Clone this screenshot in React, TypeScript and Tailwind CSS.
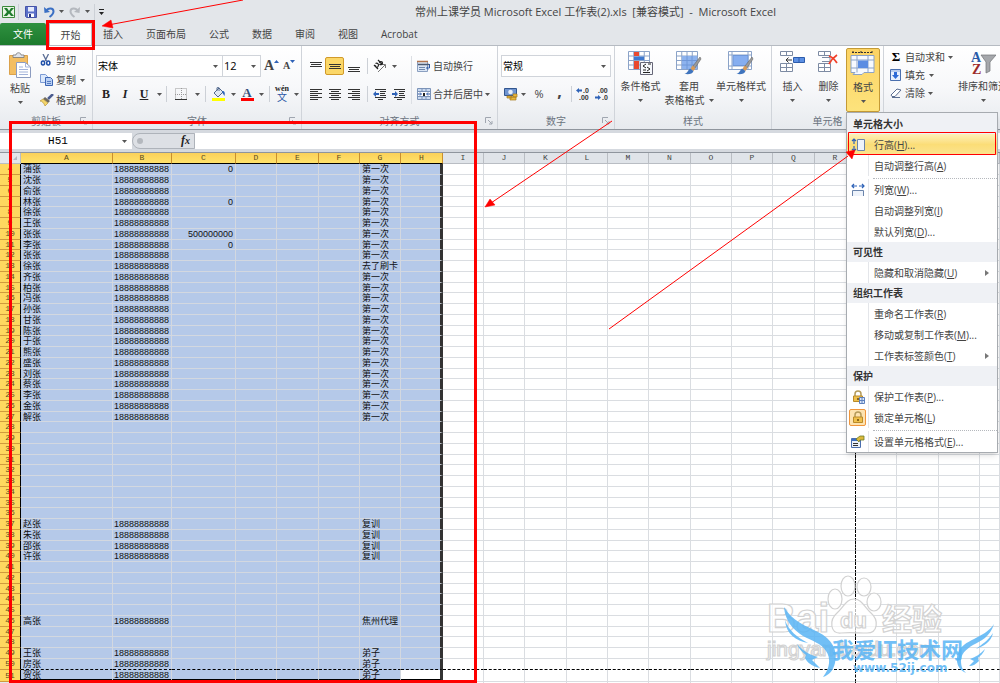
import React from 'react';
import clsx from 'clsx';

interface IconProps {
  className?: string;
}

interface RowData {
  name: string;
  amount?: string;
  note: string;
}

interface MenuEntry {
  type: 'header' | 'item' | 'separator';
  label?: string;
  hotkey?: string;
  suffix?: string;
  icon?: React.ReactNode;
  submenu?: boolean;
  active?: boolean;
  checked?: boolean;
}

const PHONE = '18888888888';

const ROWS: Record<number, RowData> = {
  4: { name: '蒲张', amount: '0', note: '第一次' },
  5: { name: '沈张', note: '第一次' },
  6: { name: '俞张', note: '第一次' },
  7: { name: '林张', amount: '0', note: '第一次' },
  8: { name: '徐张', note: '第一次' },
  9: { name: '王张', note: '第一次' },
  10: { name: '张张', amount: '500000000', note: '第一次' },
  11: { name: '李张', amount: '0', note: '第一次' },
  12: { name: '张张', note: '第一次' },
  13: { name: '徐张', note: '去了刷卡' },
  14: { name: '齐张', note: '第一次' },
  15: { name: '柏张', note: '第一次' },
  16: { name: '冯张', note: '第一次' },
  17: { name: '孙张', note: '第一次' },
  18: { name: '甘张', note: '第一次' },
  19: { name: '陈张', note: '第一次' },
  20: { name: '于张', note: '第一次' },
  21: { name: '熊张', note: '第一次' },
  22: { name: '盛张', note: '第一次' },
  23: { name: '刘张', note: '第一次' },
  24: { name: '蔡张', note: '第一次' },
  25: { name: '李张', note: '第一次' },
  26: { name: '金张', note: '第一次' },
  27: { name: '解张', note: '第一次' },
  37: { name: '赵张', note: '复训' },
  38: { name: '朱张', note: '复训' },
  39: { name: '邵张', note: '复训' },
  40: { name: '许张', note: '复训' },
  46: { name: '高张', note: '焦州代理' },
  49: { name: '王张', note: '弟子' },
  50: { name: '房张', note: '弟子' },
  51: { name: '贺张', note: '弟子' },
};

const COLUMNS = [
  { id: 'A', width: 'w-[92px]' },
  { id: 'B', width: 'w-[59px]' },
  { id: 'C', width: 'w-[64px]' },
  { id: 'D', width: 'w-[41px]' },
  { id: 'E', width: 'w-[42px]' },
  { id: 'F', width: 'w-[41px]' },
  { id: 'G', width: 'w-[41px]' },
  { id: 'H', width: 'w-[42px]' },
  { id: 'I', width: 'w-[41px]' },
  { id: 'J', width: 'w-[41px]' },
  { id: 'K', width: 'w-[42px]' },
  { id: 'L', width: 'w-[41px]' },
  { id: 'M', width: 'w-[41px]' },
  { id: 'N', width: 'w-[42px]' },
  { id: 'O', width: 'w-[41px]' },
  { id: 'P', width: 'w-[41px]' },
  { id: 'Q', width: 'w-[42px]' },
  { id: 'R', width: 'w-[41px]' },
  { id: 'S', width: 'w-[41px]' },
  { id: 'T', width: 'w-[42px]' },
  { id: 'U', width: 'w-[41px]' },
  { id: 'V', width: '' },
];

const SELECTED = 'ABCDEFGH';
const TABS = ['插入', '页面布局', '公式', '数据', '审阅', '视图', 'Acrobat'];

/* ---------- icons ---------- */

const Caret: React.FC<IconProps> = ({ className }) => (
  <svg className={clsx('h-[3px] w-[5px] shrink-0', className)} viewBox="0 0 5 3">
    <path d="M0 0h5L2.5 3z" fill="#555" />
  </svg>
);

const ExcelIcon = () => (
  <svg className="h-4 w-[13px]" viewBox="0 0 13 16">
    <path d="M.5 2.5h12v11H.5z" fill="#e8f4e4" stroke="#3b8a3b" />
    <path d="M2 4h3l2 3 2-3h3L8.500 8l3.500 4h-3L7 9.500 5 12H1.500L5 8z" fill="#1e7b2c" />
  </svg>
);

const SaveIcon = () => (
  <svg className="h-3 w-3" viewBox="0 0 12 12">
    <path d="M.5.5h11v11h-10l-1-1z" fill="#5a6fc8" stroke="#4553a8" />
    <path d="M3 1h6v4.500H3z" fill="#e4eafc" />
    <path d="M3 7.500h6V11H3z" fill="#fff" />
    <path d="M4 8h2v3H4z" fill="#26337e" />
  </svg>
);

const UndoIcon: React.FC<IconProps> = ({ className }) => (
  <svg className={clsx('h-3 w-[11px]', className)} viewBox="0 0 11 12">
    <path d="M2 5C4 1.500 9.500 1.500 9.500 5.500 9.500 8 7.500 9.500 5.500 11" fill="none" stroke="currentColor" strokeWidth="2" />
    <path d="M0 1l.5 6L6 6z" fill="currentColor" />
  </svg>
);

const PasteIcon = () => (
  <svg className="h-[26px] w-6" viewBox="0 0 24 26">
    <path d="M1.500 3.500h18v19h-18z" fill="#f3be62" stroke="#dba24c" />
    <path d="M5 5.500V3h3c0-3 5-3 5 0h3v2.500z" fill="#dfe3ea" stroke="#777" strokeWidth=".8" />
    <path d="M8.500 10.500h9l5 4.500v10.500h-14z" fill="#fff" stroke="#8c9cc0" />
    <path d="M17.500 10.500V15h5M11 17.500h9M11 20h9M11 22.500h9M11 15h4" fill="none" stroke="#a3b4da" />
  </svg>
);

const CutIcon = () => (
  <svg className="h-3 w-3" viewBox="0 0 12 12">
    <path d="M3 0l3.500 7M8.500 0L5 7" stroke="#5c6f96" strokeWidth="1.300" />
    <ellipse cx="3" cy="9" rx="1.600" ry="2" fill="none" stroke="#1f4fa8" strokeWidth="1.500" />
    <ellipse cx="8.300" cy="9" rx="1.600" ry="2" fill="none" stroke="#1f4fa8" strokeWidth="1.500" />
  </svg>
);

const CopyIcon = () => (
  <svg className="h-3 w-[13px]" viewBox="0 0 13 12">
    <path d="M.5.5h5l2 2v6h-7z" fill="#dbe8fb" stroke="#7b9ad4" />
    <path d="M5.500 3.500h5l2 2v6h-7z" fill="#b9d0f4" stroke="#3d66b4" />
    <path d="M7 7.500h4M7 9.500h4" stroke="#3d66b4" strokeWidth=".8" />
  </svg>
);

const BrushIcon = () => (
  <svg className="h-3 w-[14px]" viewBox="0 0 14 12">
    <path d="M13 0L8 5" stroke="#4b5c8f" strokeWidth="2.500" />
    <path d="M5 3l5 4-2 2-5-4z" fill="#6f6a60" />
    <path d="M3 5l5 4-3 3C4 9 2 7 0 7z" fill="#f4d66a" stroke="#b8943a" strokeWidth=".7" />
  </svg>
);

const BordersIcon = () => (
  <svg className="h-3 w-3" viewBox="0 0 12 12">
    <path d="M.5.5h11v11H.5zM6.500 0v12M0 6.500h12" fill="none" stroke="#999" strokeDasharray="1 1" />
    <path d="M0 11.500h12" stroke="#333" />
  </svg>
);

const BucketIcon = () => (
  <svg className="h-[14px] w-[14px]" viewBox="0 0 14 14">
    <path d="M7 1L2 6l4 4 5-5zM5 4V1c0-1 2-1 2 0v3" fill="#dfe7f2" stroke="#52688c" />
    <path d="M10 4c3 0 3 2 2.500 5L10.500 6z" fill="#2c63b8" />
    <path d="M0 11h13v3H0z" fill="#ff0" />
  </svg>
);

const MergeIcon = () => (
  <svg className="h-3 w-[14px]" viewBox="0 0 14 12">
    <path d="M.5.5h13v11H.5zM.5 3.500h13M.5 8.500h13M5 .5v3M9 .5v3M5 8.500v3M9 8.500v3" fill="#c9d9f0" stroke="#7b93b8" />
    <path d="M1 4h12v4H1z" fill="#fff" />
    <path d="M1 6h3M13 6h-3M3 4.500L4.500 6 3 7.500M11 4.500L9.500 6 11 7.500" fill="none" stroke="#2b57a5" />
    <path d="M6 5h2v3H6z" fill="#222" />
  </svg>
);

const WrapIcon = () => (
  <svg className="h-3 w-[14px]" viewBox="0 0 14 12">
    <path d="M.5 1.500h10v10H.5z" fill="#dbe6f5" stroke="#8a9fc0" />
    <path d="M0 1.500h11" stroke="#b3744d" strokeWidth="1.500" />
    <path d="M1 4.500h11" stroke="#4d5a70" strokeWidth="1.500" />
    <path d="M2 7.500h6M2 9.500h6" stroke="#7088ad" />
    <path d="M12.500 4v4H10M11 6.500L9.500 8 11 9.500" fill="none" stroke="#2b57a5" />
  </svg>
);

const OrientationIcon = () => (
  <svg className="h-[14px] w-[14px]" viewBox="0 0 14 14">
    <path d="M5 13l7-7M12.500 9V5.500H9" fill="none" stroke="#777" />
    <path d="M1 6l4 4M2.500 4.500c2-1 4 1 2.500 3s-3 0-2-1M5 1l4.500 4.500M6.500 4c0-2 3-2 3 0S7.500 6 6.500 5" fill="none" stroke="#222" strokeWidth="1.200" />
  </svg>
);

const LINES = {
  top: 'M0 2.500h12M1 4.500h10M0 6.500h12',
  middle: 'M0 4.500h12M1 6.500h10M0 8.500h12',
  bottom: 'M0 7.500h12M1 9.500h10M0 11.500h12',
  left: 'M0 1.500h12M0 3.500h8M0 5.500h12M0 7.500h8M0 9.500h12M0 11.500h8',
  center: 'M0 1.500h12M2 3.500h8M0 5.500h12M2 7.500h8M0 9.500h12M2 11.500h8',
  right: 'M0 1.500h12M4 3.500h8M0 5.500h12M4 7.500h8M0 9.500h12M4 11.500h8',
};

const LinesIcon: React.FC<{ kind: keyof typeof LINES }> = ({ kind }) => (
  <svg className="h-3 w-3" viewBox="0 0 12 12">
    <path d={LINES[kind]} stroke="#333" strokeWidth="1.200" />
  </svg>
);

const IndentIcon: React.FC<{ reverse?: boolean }> = ({ reverse }) => (
  <svg className="h-3 w-[14px]" viewBox="0 0 14 12">
    <path d="M2 1.500h11M7 3.500h6M7 5.500h5M7 7.500h6M2 9.500h11M5 11.500h5" stroke="#333" strokeWidth="1.200" />
    <path d={reverse ? 'M0 5h3V3l3 3-3 3V7H0z' : 'M6 5H3V3L0 6l3 3V7h3z'} fill="#2e62b7" />
  </svg>
);

const CurrencyIcon = () => (
  <svg className="h-[14px] w-[14px]" viewBox="0 0 14 14">
    <path d="M.5 1.500h12v7H.5z" fill="#6f94d0" stroke="#32568f" />
    <circle cx="6.500" cy="5" r="2.300" fill="#e7effa" />
    <path d="M6 10h6v3H6zM3 9h5v2H3zM9 7h4v3H9z" fill="#e9b93f" stroke="#a67a1a" strokeWidth=".7" />
  </svg>
);

const DecimalIcon: React.FC<{ reverse?: boolean }> = ({ reverse }) => (
  <svg className="h-[14px] w-[14px] font-['Liberation_Sans'] text-[7px] font-bold" viewBox="0 0 14 14">
    <text x={reverse ? 3 : 7} y="6" fill="#333">{reverse ? '.00' : '.0'}</text>
    <text x={reverse ? 7 : 3} y="13" fill="#333">{reverse ? '.0' : '.00'}</text>
    <path d={reverse ? 'M0 9.500h3V8l3 2.500L3 13v-1.500H0z' : 'M6 2.500H3V1L0 3.500 3 6V4.500h3z'} fill="#2e62b7" />
  </svg>
);

const GRID_LINES = 'M.5 1.500h21v18H.5zM.5 6h21M.5 10.500h21M.5 15h21M5.750 1.500v18M11 1.500v18M16.250 1.500v18';

const ConditionalIcon = () => (
  <svg className="h-[26px] w-[26px]" viewBox="0 0 26 26">
    <path d={GRID_LINES} fill="#fff" stroke="#8ba3c8" />
    <path d="M6 2h5v4H6zM6 11h5v8H6z" fill="#e9492f" />
    <path d="M6 6.500h10V10H6z" fill="#3e78cf" />
    <path d="M12.500 12.500h12v12h-12z" fill="#f6f8fc" stroke="#667" />
    <path d="M18 14l-3 2 3 2M15 20h3M19 17l3 2-3 2M15 22.500h7M20 14h3" fill="none" stroke="#222" />
  </svg>
);

const PaintBrush = () => (
  <g>
    <path d="M24 7l-7 9 2 2 6-9z" fill="#9a9a9a" stroke="#666" strokeWidth=".6" />
    <path d="M16.500 15.500l3 2.500-2 3-3-2z" fill="#d99b57" />
    <path d="M14 18.500l3.500 2.500c-1 3-4 3.500-9 3 3-1 3.500-4 5.500-5.500z" fill="#3f74bd" />
  </g>
);

const TableStyleIcon = () => (
  <svg className="h-[26px] w-[26px]" viewBox="0 0 26 26">
    <path d={GRID_LINES} fill="#fff" stroke="#8ba3c8" />
    <path d="M6 6h15v13H6z" fill="#8db3ee" />
    <path d="M6 10.500h15M6 15h15M11 6v13M16 6v13" stroke="#6f97d8" />
    <PaintBrush />
  </svg>
);

const CellStyleIcon = () => (
  <svg className="h-[26px] w-[26px]" viewBox="0 0 26 26">
    <path d="M.5 1.500h23v18H.5zM.5 5h23M.5 16h23M4 1.500v18M20 1.500v18" fill="#fff" stroke="#8ba3c8" />
    <path d="M5 5.500h15v10H5z" fill="#86aef0" stroke="#6f97d8" />
    <PaintBrush />
  </svg>
);

const InsertIcon = () => (
  <svg className="h-[26px] w-[26px]" viewBox="0 0 26 26">
    <path d="M.5 1.500h12v4H.5zM6.500 1.500v4M.5 13.500h12v8H.5zM6.500 13.500v8M.5 17.500h12" fill="#fff" stroke="#7d8ba3" />
    <path d="M13.500 7.500h11v5h-11zM19 7.500v5" fill="#5c90e4" stroke="#2d5cab" />
    <path d="M12 10H6M8.500 7.500L6 10l2.500 2.500" fill="none" stroke="#333" />
  </svg>
);

const DeleteIcon = () => (
  <svg className="h-[26px] w-[26px]" viewBox="0 0 26 26">
    <path d="M2.500 1.500h12v4h-12zM8.500 1.500v4M2.500 13.500h12v8h-12zM8.500 13.500v8M2.500 17.500h12M6 7.500h8v4H6" fill="#fff" stroke="#7d8ba3" />
    <path d="M13 6c3 1 6 4 8 7M21 5c-3 2-6 5-8 9" fill="none" stroke="#f0402a" strokeWidth="1.800" />
  </svg>
);

const FormatIcon = () => (
  <svg className="h-[26px] w-[26px]" viewBox="0 0 26 26">
    <path d="M2 1.500h20M3 0v3M11 0v3M22 0v3" stroke="#333" strokeDasharray="2 1" />
    <path d="M1 4.500h23v17H14l-2 2H3l2-2H1zM1 9h23M1 17h23M7 4.500v17M18 4.500v17" fill="#f7faff" stroke="#8ba3c8" />
    <path d="M8 9.500h10V17H8z" fill="#5b8de2" />
  </svg>
);

const FillIcon = () => (
  <svg className="h-3 w-[11px]" viewBox="0 0 11 12">
    <path d="M.5.5h10v11H.5z" fill="#e9f1fd" stroke="#4a6fae" />
    <path d="M1 1h9v2H1z" fill="#b9cdee" />
    <path d="M4 3h3v3h2L5.500 10 2 6h2z" fill="#2e6bd6" />
  </svg>
);

const EraserIcon = () => (
  <svg className="h-3 w-3" viewBox="0 0 12 12">
    <path d="M1 8l6-6 4 1-6 6.500H2z" fill="#fff" stroke="#5a6d90" />
    <path d="M2 10.500h8" stroke="#5a6d90" />
  </svg>
);

const SortIcon = () => (
  <svg className="h-[26px] w-[26px] font-['Liberation_Serif'] text-[14px] font-bold" viewBox="0 0 26 26">
    <path d="M11 5h15l-6 7v9l-4 2V12z" fill="#a5a7ab" stroke="#707276" strokeWidth=".7" />
    <text x="1" y="12" fill="#2a5caa">A</text>
    <text x="2" y="24" fill="#9c2b2b">Z</text>
  </svg>
);

const RowHeightIcon = () => (
  <svg className="h-[14px] w-[14px]" viewBox="0 0 14 14">
    <path d="M3 1v5M3 8v5M1 3l2-2 2 2M1 11l2 2 2-2" fill="none" stroke="#2e62b7" strokeWidth="1.200" />
    <path d="M6.500 1.500h7v11h-7z" fill="#eef3fb" stroke="#6a84ab" />
  </svg>
);

const ColWidthIcon = () => (
  <svg className="h-[14px] w-[14px]" viewBox="0 0 14 14">
    <path d="M1 3h5M8 3h5M3 1L1 3l2 2M11 1l2 2-2 2" fill="none" stroke="#2e62b7" strokeWidth="1.200" />
    <path d="M1.500 13V7.500h11V13" fill="#eef3fb" stroke="#6a84ab" />
  </svg>
);

const LockIcon: React.FC<{ sheet?: boolean }> = ({ sheet }) => (
  <svg className="h-[14px] w-[14px]" viewBox="0 0 14 14">
    <path d="M4 6V4c0-4 6-4 6 0v2" fill="none" stroke="#b39a5a" strokeWidth="1.500" />
    <path d="M2.500 6h9v5.500h-9z" fill="#efc04c" stroke="#b98a2a" />
    <path d="M7 8v2" stroke="#6b4b0b" strokeWidth="1.500" />
    {sheet && <path d="M8.500 7.500h5v6h-5zM8.500 10.500h5M11 7.500v6" fill="#dce8fa" stroke="#5d80bd" />}
  </svg>
);

const FormatCellsIcon = () => (
  <svg className="h-[14px] w-[14px]" viewBox="0 0 14 14">
    <path d="M.5 3.500h9v9h-9z" fill="#eaf1fb" stroke="#4a6fae" />
    <path d="M1 4h8v2H1z" fill="#3e6fc0" />
    <path d="M2 8.500h5M2 10.500h5" stroke="#333" />
    <path d="M5 4l4-3h4v4H9L8 7z" fill="#dcb83a" stroke="#6d7c2a" strokeWidth=".8" />
  </svg>
);

const MENU: MenuEntry[] = [
  { type: 'header', label: '单元格大小' },
  { type: 'item', label: '行高', hotkey: 'H', suffix: '...', icon: <RowHeightIcon />, active: true },
  { type: 'item', label: '自动调整行高', hotkey: 'A' },
  { type: 'separator' },
  { type: 'item', label: '列宽', hotkey: 'W', suffix: '...', icon: <ColWidthIcon /> },
  { type: 'item', label: '自动调整列宽', hotkey: 'I' },
  { type: 'item', label: '默认列宽', hotkey: 'D', suffix: '...' },
  { type: 'header', label: '可见性' },
  { type: 'item', label: '隐藏和取消隐藏', hotkey: 'U', submenu: true },
  { type: 'header', label: '组织工作表' },
  { type: 'item', label: '重命名工作表', hotkey: 'R' },
  { type: 'item', label: '移动或复制工作表', hotkey: 'M', suffix: '...' },
  { type: 'item', label: '工作表标签颜色', hotkey: 'T', submenu: true },
  { type: 'header', label: '保护' },
  { type: 'item', label: '保护工作表', hotkey: 'P', suffix: '...', icon: <LockIcon sheet /> },
  { type: 'item', label: '锁定单元格', hotkey: 'L', icon: <LockIcon />, checked: true },
  { type: 'separator' },
  { type: 'item', label: '设置单元格格式', hotkey: 'E', suffix: '...', icon: <FormatCellsIcon /> },
];

/* ---------- ribbon ---------- */

interface GroupProps {
  label: string;
  className: string;
  launcher?: boolean;
  children: React.ReactNode;
}

const Group: React.FC<GroupProps> = ({ label, className, launcher, children }) => (
  <section className={clsx('flex shrink-0 flex-col whitespace-nowrap border-r border-[#d0d4da]', className)}>
    <div className="h-[67px]">{children}</div>
    <div className="relative flex h-4 items-center justify-center text-[#6b7480]">
      {label}
      {launcher && (
        <svg className="absolute right-1 top-1 h-2 w-2" viewBox="0 0 8 8">
          <path d="M.5 6V.5H6M3 3l4 4M7 4v3H4" fill="none" stroke="#a0a6b0" />
        </svg>
      )}
    </div>
  </section>
);

const Sep = () => <span className="h-4 w-px shrink-0 bg-[#ccd0d6]" />;

interface ToolProps {
  label: string;
  className?: string;
  children: React.ReactNode;
}

const Tool: React.FC<ToolProps> = ({ label, className, children }) => (
  <button aria-label={label} className={clsx('flex h-[18px] shrink-0 items-center justify-center [&>svg]:shrink-0', className)}>
    {children}
  </button>
);

interface BigButtonProps {
  lines: string[];
  className: string;
  children: React.ReactNode;
}

const BigButton: React.FC<BigButtonProps> = ({ lines, className, children }) => (
  <button className={clsx('flex h-16 shrink-0 flex-col items-center pt-[2px]', className)}>
    {children}
    <span className="mt-[3px] h-[14px] leading-[14px]">{lines[0]}</span>
    <span className="flex h-[14px] items-center gap-1 leading-[14px]">
      {lines[1]}
      <Caret />
    </span>
  </button>
);

interface PickerProps {
  label: string;
  value: string;
  className: string;
}

const Picker: React.FC<PickerProps> = ({ label, value, className }) => (
  <div className={clsx('relative h-[22px] border border-[#d0d4da] bg-white', className)}>
    <select aria-label={label} defaultValue={value} className="h-full w-full appearance-none pl-px text-black outline-none">
      <option>{value}</option>
    </select>
    <Caret className="pointer-events-none absolute right-1 top-[9px]" />
  </div>
);

const FormatMenu = () => (
  <div className="absolute left-0 top-16 z-20 w-[152px] border border-[#a7abb0] bg-white shadow-md" role="menu">
    {MENU.map((entry, i) => {
      if (entry.type === 'header') {
        return (
          <div key={i} className={clsx('flex items-center bg-[#eff1f5] pl-[6px] font-bold text-[#333]', i === 0 ? 'h-[21px]' : 'h-5')}>
            {entry.label}
          </div>
        );
      }
      if (entry.type === 'separator') {
        return <div key={i} className="ml-[26px] h-[3px] border-b border-dotted border-[#b5b8bd]" />;
      }
      return (
        <button
          key={i}
          role="menuitem"
          className={clsx(
            'flex h-[21px] w-full items-center text-left text-[#444]',
            entry.active && 'bg-linear-to-b from-[#fdf0b8] via-[#fbdd77] to-[#fbe48f]'
          )}
        >
          <span className={clsx('flex h-[21px] w-[22px] shrink-0 items-center justify-center', !entry.active && 'border-r border-[#e4e6ea]')}>
            <span className={clsx('flex size-[17px] items-center justify-center', entry.checked && 'rounded-xs border border-[#f0953b] bg-[#fde3b0]')}>
              {entry.icon}
            </span>
          </span>
          <span className="ml-[5px] flex-1">
            {entry.label}(<u>{entry.hotkey}</u>){entry.suffix}
          </span>
          {entry.submenu && (
            <svg className="mr-2 h-[6px] w-1" viewBox="0 0 4 6">
              <path d="M0 0l4 3-4 3z" fill="#777" />
            </svg>
          )}
        </button>
      );
    })}
  </div>
);

const Ribbon = () => (
  <div className="flex h-[85px] border-y border-t-[#b6bbc2] border-b-[#8f959d] bg-linear-to-b from-white via-[#f7f8fa] to-[#e7eaee]">
    <Group label="剪贴板" launcher className="w-[93px]">
      <div className="flex pt-1">
        <BigButton lines={['粘贴']} className="w-10">
          <PasteIcon />
        </BigButton>
        <div className="flex flex-col">
          <button className="flex h-5 items-center gap-1"><CutIcon />剪切</button>
          <button className="flex h-5 items-center gap-[3px]"><CopyIcon />复制<Caret className="ml-px" /></button>
          <button className="flex h-5 items-center gap-[2px]"><BrushIcon />格式刷</button>
        </div>
      </div>
    </Group>

    <Group label="字体" launcher className="w-[209px]">
      <div className="flex items-center pl-[3px] pt-[9px]">
        <Picker label="字体" value="宋体" className="w-[127px] text-[10px]" />
        <Picker label="字号" value="12" className="-ml-px w-[39px] text-[11px]" />
        <Tool label="增大字号" className="w-5 pl-px font-['Liberation_Serif'] text-[14px] font-bold">
          A<svg className="mb-[10px] h-[3px] w-[5px]" viewBox="0 0 5 3"><path d="M0 3l2.500-3L5 3z" fill="#2e62b7" /></svg>
        </Tool>
        <Tool label="减小字号" className="w-4 font-['Liberation_Serif'] text-[10px] font-bold">
          A<svg className="mb-[10px] h-[3px] w-[5px]" viewBox="0 0 5 3"><path d="M0 0l2.500 3L5 0z" fill="#2e62b7" /></svg>
        </Tool>
      </div>
      <div className="flex items-center pl-1 pt-2 font-['Liberation_Serif'] text-[12px] text-[#222]">
        <Tool label="加粗" className="w-[18px] font-bold">B</Tool>
        <Tool label="倾斜" className="w-5 font-bold italic">I</Tool>
        <Tool label="下划线" className="w-[18px] font-bold underline">U</Tool>
        <Tool label="下划线选项" className="w-[13px]"><Caret /></Tool>
        <Sep />
        <Tool label="边框" className="w-7"><BordersIcon /></Tool>
        <Tool label="边框选项" className="w-1"><Caret /></Tool>
        <span className="w-[6px]" />
        <Sep />
        <Tool label="填充颜色" className="w-[25px]"><BucketIcon /></Tool>
        <Tool label="填充颜色选项" className="w-1"><Caret /></Tool>
        <Tool label="字体颜色" className="w-6">
          <span className="flex h-[14px] w-[13px] items-center justify-center border-b-[3px] border-[#f00] text-[13px] font-bold leading-[12px] text-[#35507c]">A</span>
        </Tool>
        <Tool label="字体颜色选项" className="w-1"><Caret /></Tool>
        <span className="w-[6px]" />
        <Sep />
        <Tool label="拼音" className="w-6 flex-col">
          <span className="text-[8px] font-bold leading-[6px]">wén</span>
          <span className="font-['Noto_Sans_CJK_SC'] text-[10px] leading-[10px] text-[#2b57a5]">文</span>
        </Tool>
        <Caret />
      </div>
    </Group>

    <Group label="对齐方式" launcher className="w-[196px]">
      <div className="flex pl-1 pt-[10px]">
        <div className="w-[105px]">
          <div className="flex h-5 items-center">
            <Tool label="顶端对齐" className="w-[19px]"><LinesIcon kind="top" /></Tool>
            <Tool label="垂直居中" className="w-[19px] rounded-xs border border-[#d19a2a] bg-[#fbd768]"><LinesIcon kind="middle" /></Tool>
            <Tool label="底端对齐" className="w-[19px]"><LinesIcon kind="bottom" /></Tool>
            <span className="w-1" />
            <Sep />
            <Tool label="方向" className="w-6"><OrientationIcon /></Tool>
            <Caret />
          </div>
          <div className="mt-2 flex h-5 items-center">
            <Tool label="左对齐" className="w-[19px]"><LinesIcon kind="left" /></Tool>
            <Tool label="居中" className="w-[19px]"><LinesIcon kind="center" /></Tool>
            <Tool label="右对齐" className="w-[19px]"><LinesIcon kind="right" /></Tool>
            <span className="w-1" />
            <Sep />
            <Tool label="减少缩进" className="w-6"><IndentIcon /></Tool>
            <Tool label="增加缩进" className="w-[14px]"><IndentIcon reverse /></Tool>
          </div>
        </div>
        <div className="border-l border-[#dcdfe4] pl-[5px]">
          <button className="flex h-5 items-center gap-[2px]"><WrapIcon />自动换行</button>
          <button className="mt-2 flex h-5 items-center gap-[2px]">
            <MergeIcon />合并后居中<Caret />
          </button>
        </div>
      </div>
    </Group>

    <Group label="数字" launcher className="w-[117px]">
      <div className="px-[3px] pt-[9px]">
        <Picker label="数字格式" value="常规" className="w-full text-[10px]" />
        <div className="flex items-center pt-2">
          <Tool label="会计数字格式" className="w-5"><CurrencyIcon /></Tool>
          <Caret />
          <Tool label="百分比样式" className="w-[26px] text-[11px]">%</Tool>
          <Tool label="千位分隔样式" className="w-[15px] pb-[6px] text-[16px] font-bold">,</Tool>
          <span className="w-1" />
          <Sep />
          <Tool label="增加小数位数" className="w-[22px]"><DecimalIcon /></Tool>
          <Tool label="减少小数位数" className="w-4"><DecimalIcon reverse /></Tool>
        </div>
      </div>
    </Group>

    <Group label="样式" className="w-[157px]">
      <div className="flex pt-[2px]">
        <BigButton lines={['条件格式']} className="w-[51px]"><ConditionalIcon /></BigButton>
        <BigButton lines={['套用', '表格格式']} className="w-[46px]"><TableStyleIcon /></BigButton>
        <BigButton lines={['单元格样式']} className="w-[58px]"><CellStyleIcon /></BigButton>
      </div>
    </Group>

    <Group label="单元格" className="w-[112px]">
      <div className="flex pl-[2px] pt-[2px]">
        <BigButton lines={['插入']} className="w-[37px]"><InsertIcon /></BigButton>
        <BigButton lines={['删除']} className="w-[35px]"><DeleteIcon /></BigButton>
        <div className="relative">
          <BigButton lines={['格式']} className="w-[34px] rounded-xs border border-[#c49a35] bg-linear-to-b from-[#fcd364] to-[#fde37c]">
            <FormatIcon />
          </BigButton>
          <FormatMenu />
        </div>
      </div>
    </Group>

    <Group label="" className="w-[130px]">
      <div className="flex pl-[6px] pt-[2px]">
        <div className="w-[63px]">
          <button className="flex h-[18px] items-center gap-[3px]">
            <span className="w-3 text-center font-['Liberation_Serif'] text-[13px] font-bold text-black">Σ</span>自动求和<Caret />
          </button>
          <button className="flex h-[18px] items-center gap-1"><FillIcon />填充<Caret /></button>
          <button className="flex h-[18px] items-center gap-[3px]"><EraserIcon />清除<Caret /></button>
        </div>
        <BigButton lines={['排序和筛选']} className="w-[60px]"><SortIcon /></BigButton>
      </div>
    </Group>
  </div>
);

/* ---------- sheet ---------- */

const HEADER_YELLOW = 'border-[#c98f2e] bg-linear-to-b from-[#fbd15a] to-[#ffe26a] text-[#5b4a1c]';
const HEADER_GREY = 'border-[#b9bdc3] bg-[#e0e4e9] text-[#444]';

const Sheet = () => {
  const rows = Array.from({ length: 48 }, (_, i) => i + 4);

  const cellText = (row: number, col: string) => {
    const data = ROWS[row];
    if (!data) return null;
    if (col === 'A') return data.name;
    if (col === 'B') return PHONE;
    if (col === 'C') return data.amount;
    if (col === 'G') return data.note;
    return null;
  };

  return (
    <table className="w-full table-fixed border-separate border-spacing-0 bg-white font-['Liberation_Sans','Noto_Sans_CJK_SC',sans-serif] text-[9px] leading-[10px]">
      <colgroup>
        <col className="w-[21px]" />
        {COLUMNS.map((col) => <col key={col.id} className={col.width} />)}
      </colgroup>
      <thead className="font-['Liberation_Mono',monospace] text-[8px]">
        <tr className="h-[11px]">
          <th className="border-b border-r border-[#b9bdc3] bg-[#e4e7eb] p-0">
            <svg className="ml-auto mr-[3px] h-1 w-1" viewBox="0 0 4 4">
              <path d="M4 0v4H0z" fill="#b4b9c1" />
            </svg>
          </th>
          {COLUMNS.map((col) => {
            const selected = SELECTED.includes(col.id);
            return (
              <th
                key={col.id}
                scope="col"
                className={clsx('border-b border-r p-0 font-normal', selected ? HEADER_YELLOW : HEADER_GREY, selected && 'border-b-black')}
              >
                {col.id}
              </th>
            );
          })}
        </tr>
      </thead>
      <tbody>
        {rows.map((row) => (
          <tr key={row} className={row % 4 === 3 ? 'h-[10px]' : 'h-[11px]'}>
            <th scope="row" className="border-b border-r border-b-[#cf9a3c] border-r-black bg-[#fed85f] p-0 font-['Liberation_Mono',monospace] text-[8px] font-normal text-[#5b4a1c]">
              <div className="flex h-[9px] items-center justify-center overflow-hidden">{row}</div>
            </th>
            {COLUMNS.map(({ id }) => {
              const selected = SELECTED.includes(id);
              const activeCell = id === 'H' && row === 51;
              return (
                <td
                  key={id}
                  className={clsx(
                    'border-b border-r p-0',
                    selected ? 'border-[#d3d8e0]' : 'border-[#dadde1]',
                    selected && !activeCell && 'bg-[#b5c9e9]',
                    id === 'H' && 'border-r-[3px] border-r-[#333]',
                    id === 'R' && 'border-r-black [border-right-style:dashed]',
                    row === 50 && 'border-b-black [border-bottom-style:dashed]',
                    row === 51 && selected && 'border-b-[3px] border-b-black'
                  )}
                >
                  <div
                    className={clsx(
                      'flex h-[9px] items-center whitespace-nowrap px-[2px] text-[#111]',
                      (id === 'B' || id === 'C') && 'justify-end'
                    )}
                  >
                    {cellText(row, id)}
                  </div>
                </td>
              );
            })}
          </tr>
        ))}
        <tr className="h-[11px]">
          <th scope="row" className="border-r border-[#b9bdc3] bg-[#e4e7eb] p-0" />
          {COLUMNS.map(({ id }) => (
            <td key={id} className={clsx('border-r p-0', id === 'R' ? 'border-dashed border-black' : 'border-[#dadde1]')} />
          ))}
        </tr>
      </tbody>
    </table>
  );
};

/* ---------- overlays ---------- */

const Annotations = () => (
  <svg className="pointer-events-none absolute left-0 top-0 z-30 h-[683px] w-[1000px]" viewBox="0 0 1000 683" fill="none" stroke="#f00">
    <path d="M47.500 21.500h46v27h-46z" strokeWidth="3" />
    <path d="M10.500 122.500h465v559h-465z" strokeWidth="3" />
    <path d="M848.500 132.500h147v22h-147z" />
    <path d="M243 0L108 25M612 121L491 203M609 329L848 156" />
    <path d="M102 26l9-6 2 8zM485 207l5-8 5 6zM855 150l-9 2 6 7z" fill="#f00" strokeWidth=".5" />
  </svg>
);

const Watermark = () => (
  <svg className="pointer-events-none absolute left-[760px] top-[560px] h-[123px] w-[240px]" viewBox="0 0 240 123">
    <g fill="#fff" fillOpacity=".7" stroke="#d2d2d2" strokeWidth="1.200">
      <ellipse cx="75" cy="39" rx="7" ry="10" />
      <ellipse cx="88" cy="26" rx="7" ry="10" />
      <ellipse cx="104" cy="27" rx="7" ry="9" />
      <ellipse cx="114" cy="42" rx="7" ry="9" />
      <path d="M94 39c8 0 10 8 17 14 8 7 7 20-4 20-8 0-18-1-26 0-11 1-12-13-4-20 7-6 9-14 17-14z" />
      <g className="font-['Liberation_Sans','Noto_Sans_CJK_SC',sans-serif] font-bold">
        <text x="7" y="72" fontSize="40">Bai</text>
        <text x="80" y="68" fontSize="22">du</text>
        <text x="122" y="70" fontSize="30">经验</text>
        <text x="7" y="96" fontSize="21" fontWeight="400">jingyan.baidu.com</text>
      </g>
    </g>
    <g fill="#58b4f5" fillOpacity=".85">
      <path d="M24 47c8 14 22 19 34 25 14 7 20 18 17 31-2 8-6 12-12 14 7-9 8-19 3-26-5-8-14-10-23-15C32 69 25 60 24 47z" />
      <path d="M25 60c4 11 12 17 23 23-12-2-22-9-23-23zM37 84c7 8 13 11 21 13l-6 3 8 8c-9-2-13-6-15-10l1-3c-4-3-7-6-9-11z" />
      <path d="M234 64c-4 13-13 17-21 21-8 5-12 9-12 16 0 6 2 9 5 12-8-3-11-12-8-20 5-14 26-14 36-29z" />
      <path d="M233 73c-2 9-9 13-17 16 6-5 11-7 17-16zM225 89c-2 5-5 7-7 9l1 3c-3 3-6 5-10 5l5-5-4-2c6-2 10-5 15-10z" />
      <text x="72" y="98" fontSize="22" className="font-['Noto_Sans_CJK_SC',sans-serif] font-bold">我爱IT技术网</text>
      <text x="93" y="112" fontSize="12" className="font-['DejaVu_Sans',sans-serif] font-bold">www.52ij.com</text>
    </g>
  </svg>
);

const TitleBar = () => (
  <header className="flex h-[23px] items-center pl-[2px]">
    <ExcelIcon />
    <span className="w-[3px]" />
    <Sep />
    <Tool label="保存" className="w-[23px]"><SaveIcon /></Tool>
    <Tool label="撤消" className="w-[14px] text-[#3a6fc4]"><UndoIcon /></Tool>
    <Tool label="撤消选项" className="w-[11px]"><Caret /></Tool>
    <Tool label="恢复" className="w-[14px] text-[#b4b8be]"><UndoIcon className="-scale-x-100" /></Tool>
    <Tool label="恢复选项" className="w-[13px]"><Caret /></Tool>
    <Sep />
    <Tool label="自定义快速访问工具栏" className="w-3">
      <svg className="h-[6px] w-[5px]" viewBox="0 0 5 6"><path d="M0 0h5v1H0zM0 3h5L2.500 6z" fill="#222" /></svg>
    </Tool>
    <h1 className="min-w-0 flex-1 truncate whitespace-pre pl-[84px] text-center text-[11px] text-[#444]">
      常州上课学员 Microsoft Excel 工作表(2).xls  [兼容模式]  -  Microsoft Excel
    </h1>
  </header>
);

const FormulaBar = () => (
  <div className="flex h-[23px] items-center border-b border-[#8f959d] bg-[#d5d9df] pb-px">
    <div className="relative w-[132px] shrink-0">
      <input
        aria-label="名称框"
        defaultValue="H51"
        className="h-4 w-full bg-white pr-4 text-center font-['Liberation_Mono'] text-[11px] text-black outline-none"
      />
      <Caret className="absolute right-[5px] top-[7px]" />
    </div>
    <div className="flex h-4 w-[63px] shrink-0 items-center justify-between rounded-l-full border border-[#aeb3ba] bg-[#dde0e5] px-1">
      <span className="size-[6px] rounded-full bg-[#b4b8be]" />
      <button aria-label="插入函数" className="font-['Liberation_Serif'] text-[12px] font-bold italic leading-[14px] text-[#222]">
        f<span className="text-[10px]">x</span>
      </button>
    </div>
    <input aria-label="编辑栏" className="h-4 min-w-0 flex-1 bg-white outline-none" />
  </div>
);

const App: React.FC = () => {
  return (
    <div className="relative h-screen overflow-hidden bg-[#e3e6ea] font-['Open_Sans','Noto_Sans_CJK_SC',sans-serif] text-[10px] leading-[14px] text-[#444]">
      <TitleBar />
      <nav className="flex h-[22px] items-end">
        <button className="h-[22px] w-[46px] rounded-t-xs bg-linear-to-b from-[#2f9140] to-[#1c7a2d] text-white">文件</button>
        <button className="ml-[3px] h-[22px] w-[43px] border border-b-0 border-[#b6bbc2] bg-white">开始</button>
        <div className="flex gap-px">
          {TABS.map((tab) => (
            <button key={tab} className="h-[22px] px-[11px]">{tab}</button>
          ))}
        </div>
      </nav>
      <Ribbon />
      <FormulaBar />
      <Sheet />
      <Watermark />
      <Annotations />
    </div>
  );
};

export default App;
